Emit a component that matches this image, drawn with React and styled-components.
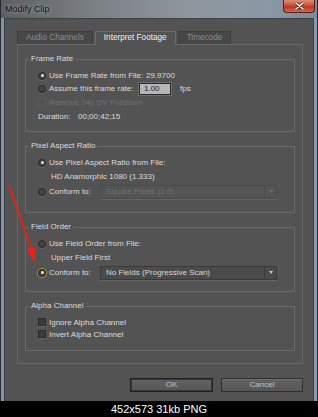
import React from "react";
import styled, { createGlobalStyle } from "styled-components";

const GlobalStyle = createGlobalStyle`
  html, body { margin: 0; padding: 0; background: #000; }
  body { font-family: "Liberation Sans", Arial, sans-serif; }
`;

const Page = styled.div`
  position: relative;
  width: 318px;
  height: 417px;
  display: flex;
  flex-direction: column;
  background: #000;
`;

const Window = styled.div`
  height: 401px;
  display: flex;
  flex-direction: column;
  box-sizing: border-box;
  border-left: 1px solid #262b31;
  border-right: 1px solid #262b31;
  background: linear-gradient(to right, #8394a4, #7a8592 50%, #8a9aab);
`;

const TitleBar = styled.div`
  height: 18px;
  display: flex;
  align-items: flex-start;
  justify-content: space-between;
  background: linear-gradient(to right, #5b5e61 0%, #7c8185 30%, #8f979e 60%, #8a98a5 85%, #7a8a98 100%);
`;

const Title = styled.div`
  padding: 4px 0 0 4px;
  font-size: 9px;
  line-height: 10px;
  color: #141414;
  text-shadow: 0 0 5px rgba(255, 255, 255, 0.55);
`;

const CloseBtn = styled.div`
  width: 32px;
  height: 13px;
  margin-right: 2px;
  box-sizing: border-box;
  display: flex;
  align-items: center;
  justify-content: center;
  border: 1px solid #5a1e14;
  border-top: none;
  border-radius: 0 0 4px 4px;
  background: linear-gradient(#e08b77, #c9533b 45%, #b53a24 55%, #d2664c);
`;

const Client = styled.div`
  flex: 1;
  margin: 0 3px;
  box-sizing: border-box;
  border: 1px solid #3b4047;
  border-bottom: none;
  background: #535353;
  padding: 11px 10px 0 12px;
  display: flex;
  flex-direction: column;
`;

const Tabs = styled.div`
  display: flex;
  gap: 2px;
  height: 14px;
  align-items: flex-end;
`;

const Tab = styled.div`
  box-sizing: border-box;
  padding: 0 8px;
  font-size: 8.2px;
  line-height: 12px;
  border: 1px solid ${(p) => (p.$active ? "#6a6a6a" : "#3d3d3d")};
  border-bottom: none;
  background: ${(p) => (p.$active ? "#535353" : "#474747")};
  color: ${(p) => (p.$active ? "#f0f0f0" : "#8c8c8c")};
  margin-bottom: ${(p) => (p.$active ? "-1px" : "0")};
  height: ${(p) => (p.$active ? "14px" : "13px")};
  position: relative;
  z-index: ${(p) => (p.$active ? 1 : 0)};
`;

const Panel = styled.div`
  height: 320px;
  box-sizing: border-box;
  border: 1px solid #686868;
  padding: 9px 7px 0 7px;
  display: flex;
  flex-direction: column;
  gap: 9px;
`;

const Group = styled.fieldset`
  margin: 0;
  min-width: 0;
  border: 1px solid #6a6a6a;
  padding: 5px 0 ${(p) => p.$pb}px 0;
  display: flex;
  flex-direction: column;
`;

const Legend = styled.legend`
  margin-left: 3px;
  padding: 0 2px;
  font-size: 8px;
  line-height: 10px;
  color: #dcdcdc;
`;

const Row = styled.div`
  height: ${(p) => p.$h}px;
  display: flex;
  align-items: center;
  padding-left: ${(p) => p.$indent ?? 12}px;
  font-size: 8px;
  color: ${(p) => (p.$disabled ? "#717171" : "#dcdcdc")};
  white-space: nowrap;
`;

const Radio = styled.span`
  width: 8px;
  height: 8px;
  box-sizing: border-box;
  border-radius: 50%;
  border: 1px solid #2c2c2c;
  background: radial-gradient(circle at 50% 40%, #4a4a4a, #363636);
  box-shadow: ${(p) =>
    p.$focus ? "0 0 0 1px #b58a2e" : "0 1px 0 #666"};
  display: flex;
  align-items: center;
  justify-content: center;
  flex-shrink: 0;
  &::after {
    content: "";
    width: 3px;
    height: 3px;
    border-radius: 50%;
    background: ${(p) => (p.$checked ? "#e6e6e6" : "transparent")};
  }
`;

const Check = styled.span`
  width: 8px;
  height: 8px;
  box-sizing: border-box;
  border: 1px solid ${(p) => (p.$disabled ? "#5c5c5c" : "#2c2c2c")};
  background: ${(p) => (p.$disabled ? "#505050" : "#3c3c3c")};
  box-shadow: ${(p) => (p.$disabled ? "none" : "0 1px 0 #666")};
  flex-shrink: 0;
`;

const Label = styled.span`
  margin-left: ${(p) => p.$ml ?? 3}px;
  width: ${(p) => (p.$w ? `${p.$w}px` : "auto")};
  flex-shrink: 0;
`;

const Input = styled.div`
  width: 32px;
  height: 12px;
  box-sizing: border-box;
  border: 1px solid #2a2a2a;
  box-shadow: 0 0 0 1px #6e6e6e;
  background: #b7b7b7;
  color: #1a1a1a;
  font-size: 8px;
  line-height: 10px;
  padding-left: 4px;
`;

const Unit = styled.span`
  margin-left: 9px;
`;

const Dropdown = styled.div`
  width: 177px;
  height: 14px;
  box-sizing: border-box;
  display: flex;
  align-items: stretch;
  border: 1px solid ${(p) => (p.$disabled ? "#4a4a4a" : "#3a3a3a")};
  box-shadow: 0 1px 0 #656565;
  background: ${(p) => (p.$disabled ? "#545454" : "#4b4b4b")};
  color: ${(p) => (p.$disabled ? "#717171" : "#d8d8d8")};
`;

const DropText = styled.div`
  flex: 1;
  padding-left: 5px;
  line-height: 12px;
`;

const DropArrow = styled.div`
  width: 11px;
  border-left: 1px solid ${(p) => (p.$disabled ? "#4a4a4a" : "#3a3a3a")};
  display: flex;
  align-items: center;
  justify-content: center;
  &::after {
    content: "";
    border-left: 2.5px solid transparent;
    border-right: 2.5px solid transparent;
    border-top: 3px solid ${(p) => (p.$disabled ? "#6f6f6f" : "#c8c8c8")};
  }
`;

const Buttons = styled.div`
  margin-top: 14px;
  display: flex;
  justify-content: flex-end;
  gap: 8px;
`;

const Button = styled.div`
  width: ${(p) => p.$w}px;
  height: 14px;
  box-sizing: border-box;
  border: 1px solid ${(p) => (p.$default ? "#1f1f1f" : "#2f2f2f")};
  box-shadow: ${(p) => (p.$default ? "inset 0 0 0 1px #3a3a3a" : "inset 0 1px 0 #707070")};
  background: linear-gradient(#626262, #565656);
  color: #c2c2c2;
  font-size: 8px;
  line-height: 12px;
  text-align: center;
`;

const Footer = styled.div`
  height: 16px;
  color: #fff;
  font-size: 11px;
  line-height: 16px;
  text-align: center;
`;

const Arrow = styled.svg`
  position: absolute;
  left: 0;
  top: 180px;
  pointer-events: none;
`;

function RadioRow({ h, checked, focus, label, w, children }) {
  return (
    <Row $h={h}>
      <Radio $checked={checked} $focus={focus} />
      <Label $w={w}>{label}</Label>
      {children}
    </Row>
  );
}

function Select({ value, disabled }) {
  return (
    <Dropdown $disabled={disabled}>
      <DropText>{value}</DropText>
      <DropArrow $disabled={disabled} />
    </Dropdown>
  );
}

export default function App() {
  return (
    <Page>
      <GlobalStyle />
      <Window>
        <TitleBar>
          <Title>Modify Clip</Title>
          <CloseBtn>
            <svg width="9" height="8" viewBox="0 0 9 8">
              <path d="M1 1 L8 7 M8 1 L1 7" stroke="#5a2a20" strokeWidth="3" strokeLinecap="round" />
              <path d="M1 1 L8 7 M8 1 L1 7" stroke="#ffffff" strokeWidth="1.6" strokeLinecap="round" />
            </svg>
          </CloseBtn>
        </TitleBar>
        <Client>
          <Tabs>
            <Tab>Audio Channels</Tab>
            <Tab $active>Interpret Footage</Tab>
            <Tab>Timecode</Tab>
          </Tabs>
          <Panel>
            <Group $pb={8}>
              <Legend>Frame Rate</Legend>
              <RadioRow h={13} checked label="Use Frame Rate from File:" w={97}>
                <span>29.9700</span>
              </RadioRow>
              <RadioRow h={13} label="Assume this frame rate:" w={90}>
                <Input>1.00</Input>
                <Unit>fps</Unit>
              </RadioRow>
              <Row $h={14} $disabled>
                <Check $disabled />
                <Label>Remove 24p DV Pulldown</Label>
              </Row>
              <Row $h={14}>
                <Label $ml={0} $w={40}>Duration:</Label>
                <span>00;00;42;15</span>
              </Row>
            </Group>
            <Group $pb={12}>
              <Legend>Pixel Aspect Ratio</Legend>
              <RadioRow h={13} checked label="Use Pixel Aspect Ratio from File:" />
              <Row $h={14} $indent={25}>HD Anamorphic 1080 (1.333)</Row>
              <RadioRow h={17} label="Conform to:" w={51}>
                <Select value="Square Pixels (1.0)" disabled />
              </RadioRow>
            </Group>
            <Group $pb={10}>
              <Legend>Field Order</Legend>
              <RadioRow h={13} label="Use Field Order from File:" />
              <Row $h={14} $indent={25}>Upper Field First</Row>
              <RadioRow h={17} checked focus label="Conform to:" w={51}>
                <Select value="No Fields (Progressive Scan)" />
              </RadioRow>
            </Group>
            <Group $pb={10}>
              <Legend>Alpha Channel</Legend>
              <Row $h={12}>
                <Check />
                <Label>Ignore Alpha Channel</Label>
              </Row>
              <Row $h={12}>
                <Check />
                <Label>Invert Alpha Channel</Label>
              </Row>
            </Group>
          </Panel>
          <Buttons>
            <Button $w={83} $default>OK</Button>
            <Button $w={82}>Cancel</Button>
          </Buttons>
        </Client>
      </Window>
      <Footer>452x573 31kb PNG</Footer>
      <Arrow width="50" height="90" viewBox="0 0 50 90">
        <line x1="9" y1="5" x2="31" y2="68" stroke="#e3231c" strokeWidth="2" />
        <polygon points="36,84 26.5,69.4 35.1,66.4" fill="#e3231c" />
      </Arrow>
    </Page>
  );
}
